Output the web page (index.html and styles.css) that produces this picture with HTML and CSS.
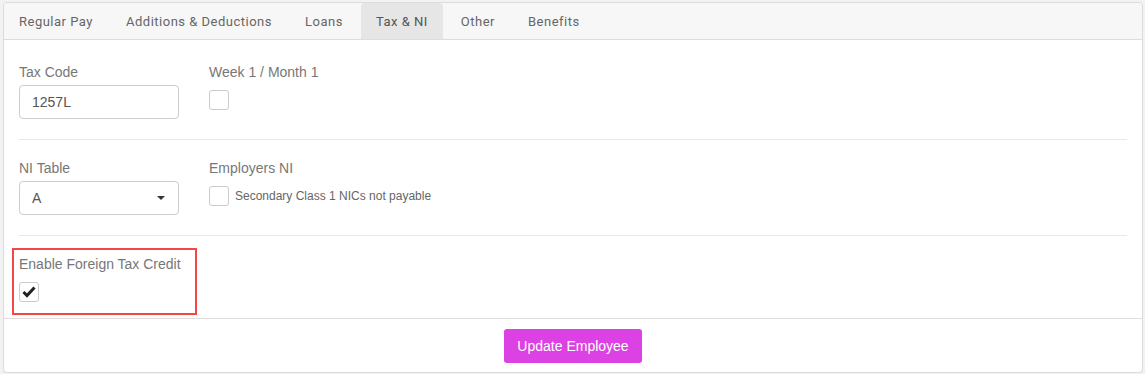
FILE: index.html
```html
<!DOCTYPE html>
<html>
  <head>
    <meta charset="utf-8" />
    <title>Employee - Tax & NI</title>
    <link rel="stylesheet" href="styles.css">
  </head>
  <body>
    <div class="card">
      <ul class="tabs">
        <li>Regular Pay</li>
        <li>Additions &amp; Deductions</li>
        <li>Loans</li>
        <li class="active">Tax &amp; NI</li>
        <li>Other</li>
        <li>Benefits</li>
      </ul>

      <div class="panel">
        <div class="row">
          <div class="group">
            <label>Tax Code</label>
            <div class="input">1257L</div>
          </div>
          <div class="group">
            <label>Week 1 / Month 1</label>
            <div class="check-line">
              <span class="checkbox"></span>
            </div>
          </div>
        </div>

        <hr>

        <div class="row">
          <div class="group">
            <label>NI Table</label>
            <div class="input select">
              <span>A</span>
              <span class="caret"></span>
            </div>
          </div>
          <div class="group">
            <label>Employers NI</label>
            <div class="check-line">
              <span class="checkbox"></span>
              <span class="check-text">Secondary Class 1 NICs not payable</span>
            </div>
          </div>
        </div>

        <hr>

        <div class="row">
          <div class="group highlight">
            <label>Enable Foreign Tax Credit</label>
            <div class="check-line">
              <span class="checkbox checked">
                <svg width="20" height="20" viewBox="0 0 20 20">
                  <polyline points="4.5,10 8,13.5 15.5,5.5" fill="none" stroke="#222" stroke-width="3"/>
                </svg>
              </span>
            </div>
          </div>
        </div>
      </div>

      <div class="footer">
        <button class="btn-update">Update Employee</button>
      </div>
    </div>
  </body>
</html>
```

FILE: styles.css
```css
html,
body {
  background-color: #f2f2f2;
}
body {
  margin: 2px 2px 0 3px;
  font-family: 'Liberation Sans', Arial, sans-serif;
  font-size: 14px;
  color: #555;
}
.card {
  background-color: #fff;
  border: 1px solid #dcdcdc;
  border-radius: 4px;
  box-shadow: 0 1px 1px rgba(0, 0, 0, 0.06);
}
.tabs {
  display: flex;
  gap: 3px;
  margin: 0;
  padding: 0;
  list-style: none;
  height: 36px;
  background-color: #f7f7f7;
  border-bottom: 1px solid #ddd;
  border-radius: 4px 4px 0 0;
}
.tabs li {
  display: flex;
  align-items: center;
  padding: 0 15px;
  font-family: Roboto, 'Liberation Sans', sans-serif;
  font-size: 13px;
  letter-spacing: 0.5px;
  color: #666;
  cursor: pointer;
}
.tabs li.active {
  background-color: #e6e6e6;
  border-radius: 4px 4px 0 0;
  color: #555;
}
.panel {
  padding: 22px 15px 16px;
}
.row {
  display: grid;
  grid-template-columns: 160px auto;
  column-gap: 30px;
}
.group label {
  display: block;
  line-height: 20px;
  margin-bottom: 3px;
  color: #777;
}
.input {
  box-sizing: border-box;
  height: 34px;
  padding: 0 12px;
  border: 1px solid #ccc;
  border-radius: 4px;
  display: flex;
  align-items: center;
  color: #555;
}
.select {
  justify-content: space-between;
  padding-right: 13px;
}
.caret {
  width: 0;
  height: 0;
  border-left: 4px solid transparent;
  border-right: 4px solid transparent;
  border-top: 4px solid #333;
}
.check-line {
  display: flex;
  align-items: center;
  gap: 6px;
  margin-top: 8px;
}
.checkbox {
  box-sizing: border-box;
  width: 20px;
  height: 20px;
  border: 1px solid #ccc;
  border-radius: 3px;
  position: relative;
}
.checkbox svg {
  position: absolute;
  top: -1px;
  left: -1px;
}
.check-text {
  font-size: 12px;
  color: #666;
}
hr {
  border: 0;
  border-top: 1px solid #e8e8e8;
  margin: 20px 0 18px;
}
.highlight {
  box-sizing: border-box;
  width: 185px;
  margin: -6px 0 -13px -7px;
  padding: 4px 5px 11px;
  border: 2px solid #f44646;
}
.footer {
  border-top: 1px solid #ddd;
  padding: 10px 0 9px;
  display: flex;
  justify-content: center;
}
.btn-update {
  height: 34px;
  padding: 0 13px;
  border: 0;
  border-radius: 3px;
  background-color: #dc41e4;
  color: #fff;
  font-family: 'Liberation Sans', Arial, sans-serif;
  font-size: 14px;
  cursor: pointer;
}
```
